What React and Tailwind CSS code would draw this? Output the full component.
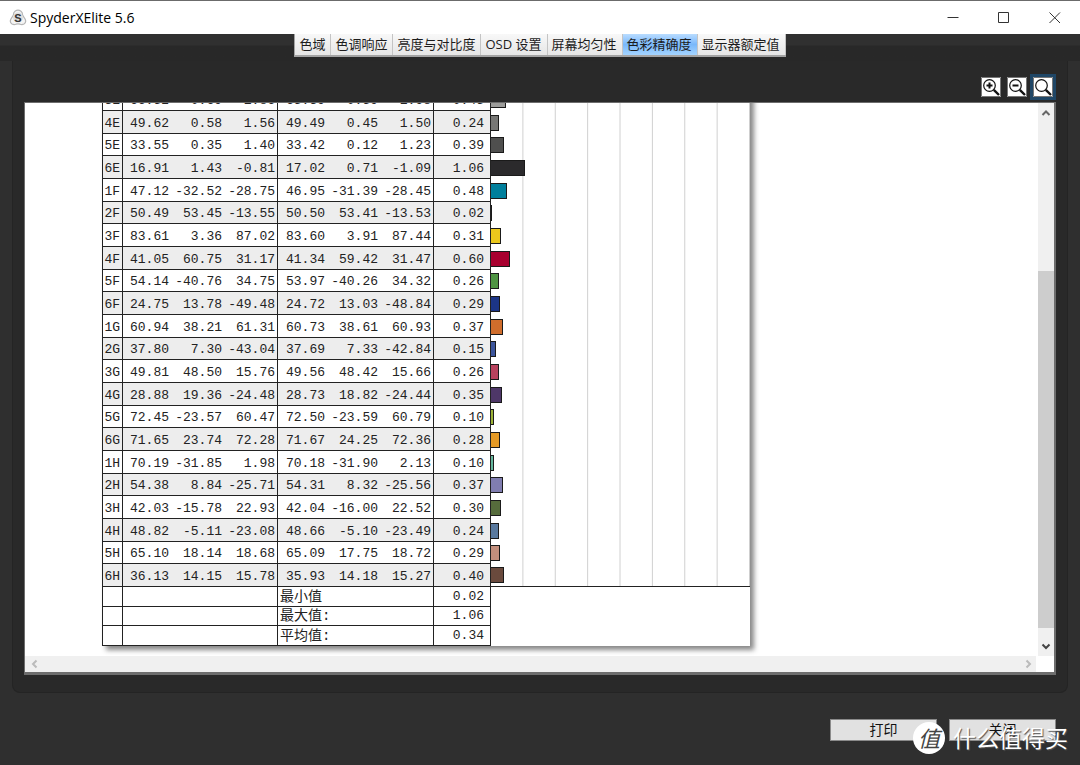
const TABS = ['色域', '色调响应', '亮度与对比度', 'OSD 设置', '屏幕均匀性', '色彩精确度', '显示器额定值']

// patch, target L a b, measured L a b, delta E, swatch
const ROWS = [
  ['3E', '66.52', '0.69', '1.86', '65.39', '0.59', '1.98', '0.45', '#9c9c9a'],
  ['4E', '49.62', '0.58', '1.56', '49.49', '0.45', '1.50', '0.24', '#777775'],
  ['5E', '33.55', '0.35', '1.40', '33.42', '0.12', '1.23', '0.39', '#4f4f4e'],
  ['6E', '16.91', '1.43', '-0.81', '17.02', '0.71', '-1.09', '1.06', '#2b2a2c'],
  ['1F', '47.12', '-32.52', '-28.75', '46.95', '-31.39', '-28.45', '0.48', '#007f9c'],
  ['2F', '50.49', '53.45', '-13.55', '50.50', '53.41', '-13.53', '0.02', '#bf4a90'],
  ['3F', '83.61', '3.36', '87.02', '83.60', '3.91', '87.44', '0.31', '#ebc81c'],
  ['4F', '41.05', '60.75', '31.17', '41.34', '59.42', '31.47', '0.60', '#a8002f'],
  ['5F', '54.14', '-40.76', '34.75', '53.97', '-40.26', '34.32', '0.26', '#4f9443'],
  ['6F', '24.75', '13.78', '-49.48', '24.72', '13.03', '-48.84', '0.29', '#1c3586'],
  ['1G', '60.94', '38.21', '61.31', '60.73', '38.61', '60.93', '0.37', '#d06d2c'],
  ['2G', '37.80', '7.30', '-43.04', '37.69', '7.33', '-42.84', '0.15', '#3c559c'],
  ['3G', '49.81', '48.50', '15.76', '49.56', '48.42', '15.66', '0.26', '#b9435e'],
  ['4G', '28.88', '19.36', '-24.48', '28.73', '18.82', '-24.44', '0.35', '#4e3768'],
  ['5G', '72.45', '-23.57', '60.47', '72.50', '-23.59', '60.79', '0.10', '#9cb236'],
  ['6G', '71.65', '23.74', '72.28', '71.67', '24.25', '72.36', '0.28', '#e59a26'],
  ['1H', '70.19', '-31.85', '1.98', '70.18', '-31.90', '2.13', '0.10', '#65b79e'],
  ['2H', '54.38', '8.84', '-25.71', '54.31', '8.32', '-25.56', '0.37', '#807db0'],
  ['3H', '42.03', '-15.78', '22.93', '42.04', '-16.00', '22.52', '0.30', '#566c3c'],
  ['4H', '48.82', '-5.11', '-23.08', '48.66', '-5.10', '-23.49', '0.24', '#5a7a9f'],
  ['5H', '65.10', '18.14', '18.68', '65.09', '17.75', '18.72', '0.29', '#c38f7d'],
  ['6H', '36.13', '14.15', '15.78', '35.93', '14.18', '15.27', '0.40', '#6a4a3d'],
]

const SUMMARY = [
  ['最小值', '0.02'],
  ['最大值:', '1.06'],
  ['平均值:', '0.34'],
]

// the chart column spans 0..8 delta E
const CHART_MAX = 8

const CELL = 'pt-[3px] border-b border-[#222] text-right align-middle group-odd:bg-white group-even:bg-[#ededed]'

function TitleBar() {
  return (
    <header className="flex h-[34px] shrink-0 items-center border-t border-[#6b6b6b] bg-white pl-[9px] pr-[19px]">
      <svg width="18" height="18" viewBox="0 0 18 18" className="shrink-0" aria-hidden="true">
        <path
          d="M6 2.2Q9 .2 12 2.2Q13.600 3.400 13.600 6L16.200 10.200Q17.600 13.400 15 15Q13 16 11 15.200Q9 14.700 7 15.200Q5 16 3 15Q.4 13.400 1.800 10.200L4.400 6Q4.400 3.400 6 2.200Z"
          fill="#f4f4f4"
          stroke="#b5b5b5"
          strokeWidth="1.2"
        />
        <circle cx="9" cy="8.500" r="5" fill="#dedede" />
        <text x="9" y="12.500" textAnchor="middle" fontSize="11" fontWeight="700" fontFamily="Liberation Sans, sans-serif" fill="#333">S</text>
      </svg>
      <h1 className="ml-[3px] text-[14px] leading-[18px] text-black">SpyderXElite 5.6</h1>
      <div className="ml-auto flex items-center gap-[39px] text-[#333]">
        <button type="button" aria-label="最小化">
          <svg width="12" height="12" viewBox="0 0 12 12" className="block" stroke="currentColor"><path d="M.5 5.500h11" /></svg>
        </button>
        <button type="button" aria-label="最大化">
          <svg width="12" height="12" viewBox="0 0 12 12" className="block" fill="none" stroke="currentColor"><path d="M.5.5h10v10H.5z" /></svg>
        </button>
        <button type="button" aria-label="关闭窗口">
          <svg width="12" height="12" viewBox="0 0 12 12" className="block" stroke="currentColor"><path d="M.5.5l10.500 10.500M11 .5L.5 11" /></svg>
        </button>
      </div>
    </header>
  )
}

function TabBar() {
  return (
    <nav className="flex h-[27px] shrink-0 items-start justify-center bg-linear-to-b from-[#303030] from-40% to-[#282828] to-45%">
      <div role="tablist" className="flex border-b-2 border-l border-[#a3a3a3]">
        {TABS.map((tab) => (
          <button
            key={tab}
            type="button"
            role="tab"
            aria-selected={tab === '色彩精确度'}
            className="h-[21px] border-r border-[#c4c4c4] bg-linear-to-b from-[#f8f8f8] to-[#e6e6e6] pr-[5px] pl-[4px] text-[13px] leading-[19px] whitespace-nowrap text-[#1c1c1c] aria-selected:from-[#b9dcff] aria-selected:via-[#79b8fb] aria-selected:to-[#a4d4ff]"
          >
            {tab}
          </button>
        ))}
      </div>
    </nav>
  )
}

function ZoomButton({ label, active, children }) {
  return (
    <button
      type="button"
      aria-label={label}
      className={active ? 'border-3 border-[#1f4666]' : 'border-3 border-transparent'}
    >
      <svg width="20" height="20" viewBox="0 0 20 20" className="block bg-white" fill="none" stroke="#111">
        <path d="M.5.5h19v19H.5z" stroke="#777" />
        <circle cx="8.500" cy="8.500" r="5.800" strokeWidth="1.2" />
        <path d="M12.800 12.800l5.200 5.200" strokeWidth="2.400" />
        <path d={children} strokeWidth="2" />
      </svg>
    </button>
  )
}

function ResultRow({ row }) {
  const [patch, ...values] = row
  const swatch = values.pop()
  const delta = values.pop()

  return (
    <tr className="group h-[23px] nth-[3n]:h-[22px]">
      <th scope="row" className={`${CELL} border-r pr-[2px] font-normal`}>{patch}</th>
      {values.map((v, i) => (
        <td key={i} className={`${CELL} pr-[2px] ${i % 3 === 2 ? 'border-r' : ''}`}>{v}</td>
      ))}
      <td className={`${CELL} border-r pr-[6px]`}>{delta}</td>
      <td className="border-[#222] bg-[linear-gradient(to_left,#cfcfcf_1px,transparent_1px)] bg-[length:12.5%_100%] p-0 align-middle group-last:border-b">
        <div
          className="h-4 border border-l-0 border-[#1a1a1a]"
          style={{ width: `${(Number(delta) / CHART_MAX) * 100}%`, background: swatch }}
        />
      </td>
    </tr>
  )
}

function SummaryRow({ label, value }) {
  return (
    <tr className="h-5 even:h-[19px]">
      <td className="border-r border-b border-[#222] p-0" />
      <td colSpan={3} className="border-r border-b border-[#222] p-0" />
      <th colSpan={3} scope="row" className="border-r border-b border-[#222] p-0 pl-[2px] text-left text-[14px] leading-[18px] font-normal">{label}</th>
      <td className="border-r border-b border-[#222] p-0 pr-[6px] text-right leading-[18px]">{value}</td>
      <td className="p-0" />
    </tr>
  )
}

function Report() {
  return (
    <div className="ml-[77px] w-[648px] shrink-0 bg-white shadow-[4px_4px_5px_#888]">
      <table className="w-full table-fixed border-separate border-spacing-0 border-l border-[#222] font-['Liberation_Mono','Noto_Sans_CJK_SC',monospace] text-[13px] leading-[18px] text-[#222]">
        <colgroup>
          <col className="w-[20px]" />
          <col className="w-[48px]" />
          <col className="w-[53px]" />
          <col className="w-[54px]" />
          <col className="w-[49px]" />
          <col className="w-[53px]" />
          <col className="w-[54px]" />
          <col className="w-[57px]" />
          <col />
        </colgroup>
        <tbody>
          {ROWS.map((row) => <ResultRow key={row[0]} row={row} />)}
        </tbody>
        <tbody>
          {SUMMARY.map(([label, value]) => <SummaryRow key={label} label={label} value={value} />)}
        </tbody>
      </table>
    </div>
  )
}

function Chevron({ d, label, className }) {
  return (
    <button type="button" aria-label={label} className="flex size-4 shrink-0 items-center justify-center">
      <svg width="10" height="10" viewBox="0 0 10 10" fill="none" stroke="currentColor" strokeWidth="2" className={className}><path d={d} /></svg>
    </button>
  )
}

function Viewer() {
  return (
    <section className="flex min-h-0 flex-1 flex-col border-t border-r-2 border-b-3 border-l border-[#6d6d6d] bg-white">
      <div className="flex min-h-0 flex-1">
        <div className="flex min-w-0 flex-1 flex-col justify-end overflow-hidden pb-[10px]">
          <Report />
        </div>
        <div className="flex w-4 flex-col bg-[#f0f0f0] py-[2px]">
          <Chevron label="向上滚动" d="M1.500 7L5 3.500L8.500 7" className="text-[#666]" />
          <div className="flex-[150]" />
          <div className="flex-[357] bg-[#cdcdcd]" />
          <div className="flex-[10]" />
          <Chevron label="向下滚动" d="M1.500 3.500L5 7L8.500 3.500" className="text-[#444]" />
        </div>
      </div>
      <div className="mr-[18px] flex h-4 shrink-0 items-center justify-between bg-[#f0f0f0] pl-[2px]">
        <Chevron label="向左滚动" d="M6.500 1.500L3 5L6.500 8.500" className="text-[#bbb]" />
        <Chevron label="向右滚动" d="M3.500 1.500L7 5L3.500 8.500" className="text-[#bbb]" />
      </div>
    </section>
  )
}

function Watermark() {
  return (
    <div className="pointer-events-none absolute right-3 bottom-[10px] flex items-center gap-2">
      <span className="flex size-8 items-center justify-center rounded-full bg-white text-[22px] leading-none text-[#444] italic">值</span>
      <span className="text-[23px] leading-[34px] text-white [text-shadow:1px_1px_1px_#555]">什么值得买</span>
    </div>
  )
}

export default function App() {
  return (
    <div className="relative flex h-screen flex-col overflow-hidden bg-[#2f2f2f] font-['Open_Sans','Noto_Sans_CJK_SC',sans-serif]">
      <TitleBar />
      <TabBar />
      <main className="mx-3 flex min-h-0 flex-1 flex-col rounded-b-lg border border-t-0 border-[#242424] bg-[#292929] px-[11px] pt-[13px] pb-[17px]">
        <div className="flex h-[28px] shrink-0 items-start justify-end">
          <ZoomButton label="放大" active={false}>M5.500 8.500h6M8.500 5.500v6</ZoomButton>
          <ZoomButton label="缩小" active={false}>M5.500 8.500h6</ZoomButton>
          <ZoomButton label="实际大小" active>M0 0</ZoomButton>
        </div>
        <Viewer />
      </main>
      <footer className="flex h-[72px] shrink-0 items-start justify-end gap-3 pt-[26px] pr-[24px]">
        <button type="button" className="h-[22px] w-[107px] border border-[#8a8a8a] bg-[#e1e1e1] text-[14px] leading-[20px] text-[#111]">打印</button>
        <button type="button" className="h-[22px] w-[107px] border border-[#8a8a8a] bg-[#e1e1e1] text-[14px] leading-[20px] text-[#111]">关闭</button>
      </footer>
      <Watermark />
    </div>
  )
}
